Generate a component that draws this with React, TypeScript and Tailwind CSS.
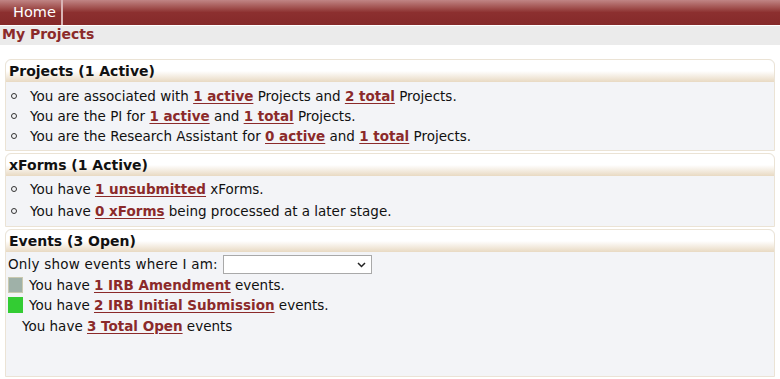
import React from "react";

const font = { fontFamily: '"DejaVu Sans", Verdana, sans-serif' };

function L({ children }: { children: React.ReactNode }) {
  return <a className="font-bold text-[#8b2a2a] underline decoration-[#8b2a2a] underline-offset-2" href="#">{children}</a>;
}

function Panel({ title, children, grow }: { title: string; children: React.ReactNode; grow?: boolean }) {
  return (
    <div className={`mx-[5px] mb-[2px] rounded-t-[6px] border border-[#ebe3d5] bg-[#f3f4f7] ${grow ? "flex-1" : ""}`}>
      <div className="h-[22px] rounded-t-[6px] bg-gradient-to-b from-white via-white to-[#e8d9c2] pl-[3px] text-[14px] font-bold leading-[22px] text-[#111]">
        {title}
      </div>
      {children}
    </div>
  );
}

function Item({ children }: { children: React.ReactNode }) {
  return (
    <div className="flex h-[20px] items-center text-[13.5px] text-[#111]">
      <span className="ml-[5px] mr-[13px] inline-block h-[6px] w-[6px] rounded-full border border-[#333]" />
      <span>{children}</span>
    </div>
  );
}

export default function App() {
  return (
    <div className="flex h-[379px] w-[780px] flex-col overflow-hidden bg-white" style={font}>
      <div className="flex h-[25px] bg-gradient-to-b from-[#c08585] via-[#8c2f2f] to-[#852a2a]">
        <div className="flex h-full w-[63px] items-center border-r-2 border-[#d9b5b5] pl-[13px] text-[14.5px] text-white">Home</div>
      </div>
      <div className="h-px bg-white" />
      <div className="h-[19px] bg-[#ebebeb] pl-[2px] text-[14px] font-bold leading-[16px] text-[#8b2a2a]">My Projects</div>
      <div className="h-[14px]" />
      <Panel title="Projects (1 Active)">
        <div className="pb-[4px] pt-[4px]">
          <Item>You are associated with <L>1 active</L> Projects and <L>2 total</L> Projects.</Item>
          <Item>You are the PI for <L>1 active</L> and <L>1 total</L> Projects.</Item>
          <Item>You are the Research Assistant for <L>0 active</L> and <L>1 total</L> Projects.</Item>
        </div>
      </Panel>
      <Panel title="xForms (1 Active)">
        <div className="pb-[5px] pt-[3px]">
          <Item>You have <L>1 unsubmitted</L> xForms.</Item>
          <div className="h-[2px]" />
          <Item>You have <L>0 xForms</L> being processed at a later stage.</Item>
        </div>
      </Panel>
      <Panel title="Events (3 Open)" grow>
        <div className="pl-[2px] pt-[2px] text-[13.5px] text-[#111]">
          <div className="flex h-[21px] items-center">
            <span className="tracking-[0.2px]">Only show events where I am:</span>
            <div className="ml-[5px] flex h-[19px] w-[149px] items-center justify-end border border-[#a9a9a9] bg-white pr-[5px]">
              <svg width="9" height="6" viewBox="0 0 9 6"><path d="M1 1l3.5 3.5L8 1" fill="none" stroke="#222" strokeWidth="1.5" /></svg>
            </div>
          </div>
          <div className="flex h-[20px] items-center">
            <span className="mr-[6px] h-[16px] w-[15px] border border-[#c9c9b0] bg-[#9fb1a8]" />
            <span>You have <L>1 IRB Amendment</L> events.</span>
          </div>
          <div className="flex h-[20px] items-center">
            <span className="mr-[6px] h-[16px] w-[15px] bg-[#33cc33]" />
            <span>You have <L>2 IRB Initial Submission</L> events.</span>
          </div>
          <div className="flex h-[22px] items-center pl-[14px]">
            <span>You have <L>3 Total Open</L> events</span>
          </div>
        </div>
      </Panel>
    </div>
  );
}
